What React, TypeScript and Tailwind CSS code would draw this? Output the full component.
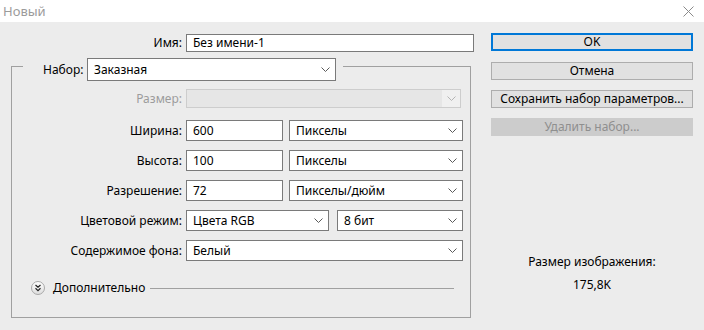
const Chevron = ({ color = '#5a5a5a' }: { color?: string }) => (
  <svg width="9" height="5" viewBox="0 0 9 5" className="shrink-0">
    <path d="M0.5 0.5 L4.5 4.5 L8.5 0.5" fill="none" stroke={color} strokeWidth="1" />
  </svg>
);

const Select = ({ value, className }: { value: string; className: string }) => (
  <div className={`flex items-center justify-between bg-white border border-[#7a7a7a] pl-[6px] pr-[5px] ${className}`}>
    <span>{value}</span>
    <Chevron />
  </div>
);

const Input = ({ value, className }: { value: string; className: string }) => (
  <div className={`flex items-center bg-white border border-[#7a7a7a] pl-[6px] ${className}`}>
    {value}
  </div>
);

const Row = ({ label, children, className = '' }: { label: string; children: React.ReactNode; className?: string }) => (
  <div className={`flex items-center h-[21px] ${className}`}>
    <span className="w-[163px] shrink-0 text-right pr-[4px]">{label}</span>
    {children}
  </div>
);

export default function App() {
  return (
    <div className="w-[704px] h-[330px] bg-[#ececec] text-[12px] leading-[16px] text-black font-['Noto_Sans',sans-serif] flex flex-col overflow-hidden">
      {/* Title bar */}
      <div className="h-[22px] bg-white flex items-center justify-between pl-[3px] pr-[10px] shrink-0">
        <span className="text-[#9b9b9b] text-[13px]">Новый</span>
        <svg width="11" height="11" viewBox="0 0 11 11">
          <path d="M0.5 0.5 L10.5 10.5 M10.5 0.5 L0.5 10.5" stroke="#8a8a8a" strokeWidth="1" />
        </svg>
      </div>

      <div className="flex">
        {/* Left panel */}
        <div className="w-[480px] pl-[11px] pt-[12px] shrink-0">
          <div className="flex items-center h-[18px]">
            <span className="w-[175px] shrink-0 text-right pr-[4px]">Имя:</span>
            <Input value="Без имени-1" className="w-[288px] h-[18px]" />
          </div>

          <fieldset className="mt-[-1px] w-[460px] border border-[#a0a0a0] pl-[11px] pr-[7px] pb-[22px] m-0 min-w-0">
            <legend className="pl-[20px] pr-[7px] pt-[7px] flex items-center">
              <span className="w-[44px] text-right pr-[6px] whitespace-nowrap">Набор:</span>
              <Select value="Заказная" className="w-[249px] h-[23px]" />
            </legend>

            <div className="flex items-center h-[19px] mt-[8px]">
              <span className="w-[163px] shrink-0 text-right pr-[4px] text-[#9c9c9c]">Размер:</span>
              <div className="w-[275px] h-[19px] border border-[#cdcdcd] bg-[#f0f0f0] flex items-center">
                <div className="w-[255px] h-full bg-[#e6e6e6]" />
                <div className="flex-1 flex justify-center">
                  <Chevron color="#b4b4b4" />
                </div>
              </div>
            </div>

            <div className="flex flex-col gap-[9px] mt-[12px]">
              <Row label="Ширина:">
                <Input value="600" className="w-[97px] h-[21px]" />
                <Select value="Пикселы" className="w-[174px] h-[21px] ml-[6px]" />
              </Row>
              <Row label="Высота:">
                <Input value="100" className="w-[97px] h-[21px]" />
                <Select value="Пикселы" className="w-[174px] h-[21px] ml-[6px]" />
              </Row>
              <Row label="Разрешение:">
                <Input value="72" className="w-[97px] h-[21px]" />
                <Select value="Пикселы/дюйм" className="w-[174px] h-[21px] ml-[6px]" />
              </Row>
              <Row label="Цветовой режим:">
                <Select value="Цвета RGB" className="w-[143px] h-[21px]" />
                <Select value="8 бит" className="w-[126px] h-[21px] ml-[8px]" />
              </Row>
              <Row label="Содержимое фона:">
                <Select value="Белый" className="w-[277px] h-[21px]" />
              </Row>
            </div>

            <div className="flex items-center h-[14px] mt-[20px] ml-[8px] mr-[9px]">
              <svg width="14" height="14" viewBox="0 0 14 14" className="shrink-0">
                <defs>
                  <linearGradient id="adv" x1="0" y1="0" x2="0" y2="1">
                    <stop offset="0" stopColor="#ffffff" />
                    <stop offset="1" stopColor="#dcdcdc" />
                  </linearGradient>
                </defs>
                <circle cx="7" cy="7" r="6.5" fill="url(#adv)" stroke="#a8a8a8" />
                <path d="M4.5 4 L7 6.3 L9.5 4 M4.5 7.3 L7 9.6 L9.5 7.3" fill="none" stroke="#222" strokeWidth="1.2" />
              </svg>
              <span className="ml-[8px] whitespace-nowrap">Дополнительно</span>
              <div className="flex-1 h-px bg-[#a0a0a0] ml-[5px]" />
            </div>
          </fieldset>
        </div>

        {/* Right panel */}
        <div className="w-[202px] ml-[11px] pt-[11px] flex flex-col">
          <button className="h-[18px] bg-[#e1e1e1] border-2 border-[#0078d7] flex items-center justify-center">OK</button>
          <button className="h-[18px] mt-[11px] bg-[#e1e1e1] border border-[#adadad] flex items-center justify-center">Отмена</button>
          <button className="h-[18px] mt-[10px] bg-[#e1e1e1] border border-[#adadad] flex items-center justify-center whitespace-nowrap">Сохранить набор параметров...</button>
          <button className="h-[18px] mt-[10px] bg-[#cccccc] border border-[#cccccc] text-[#8f8f8f] flex items-center justify-center">Удалить набор...</button>
          <div className="mt-[118px] text-center">Размер изображения:</div>
          <div className="mt-[7px] text-center">175,8K</div>
        </div>
      </div>
    </div>
  );
}
